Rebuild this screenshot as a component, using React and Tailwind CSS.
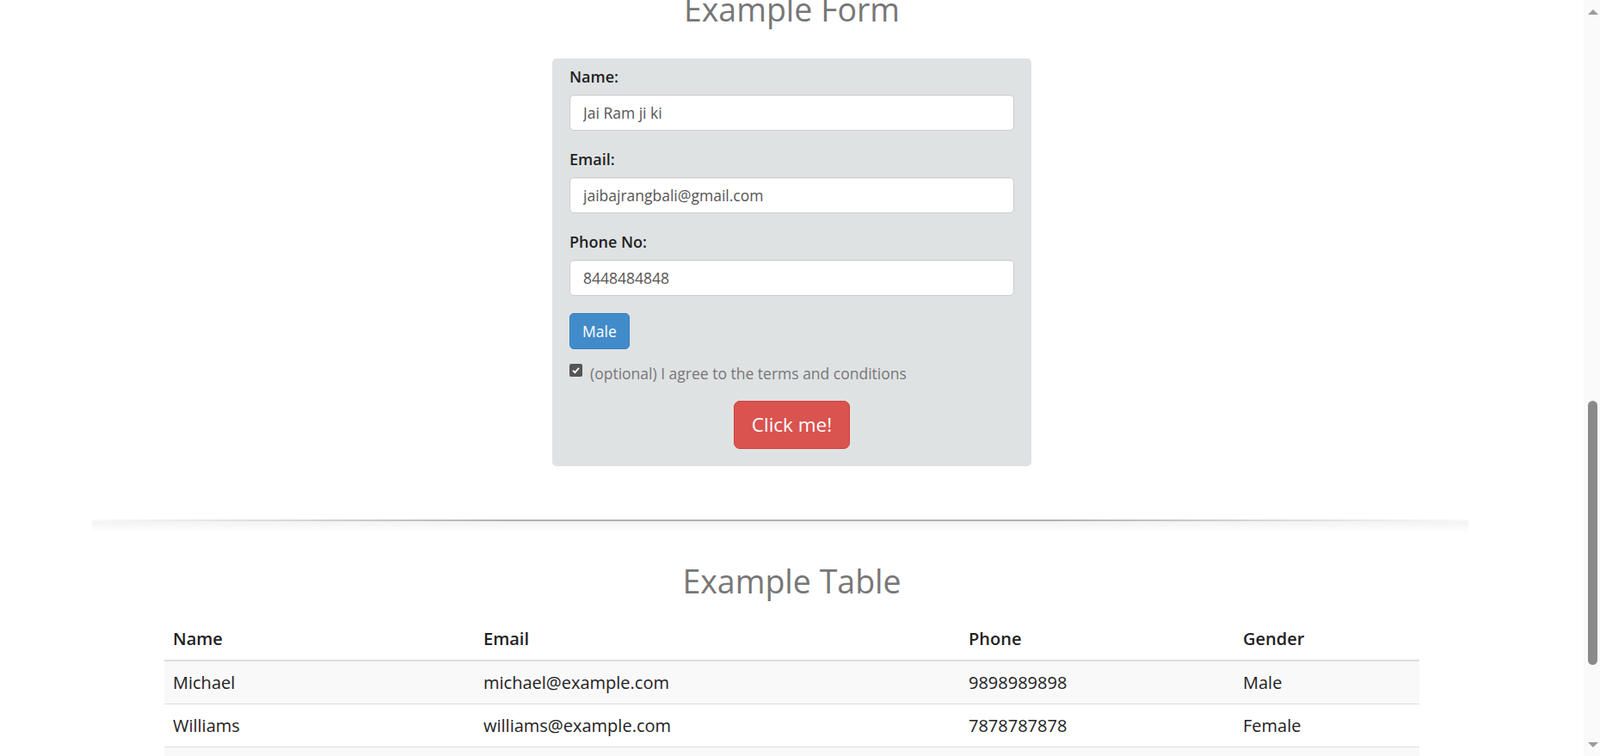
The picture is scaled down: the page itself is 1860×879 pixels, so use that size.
import React from 'react';

const rows = [
  { name: 'Michael', email: 'michael@example.com', phone: '9898989898', gender: 'Male' },
  { name: 'Williams', email: 'williams@example.com', phone: '7878787878', gender: 'Female' },
  { name: 'Sophia', email: 'sophia@example.com', phone: '9696969696', gender: 'Female' },
];

function Field({ label, value }) {
  return (
    <div className="mb-[21px]">
      <label className="block h-[25px] leading-[25px] mb-[8px] text-[18px] font-semibold text-[#222]">{label}</label>
      <input
        readOnly
        value={value}
        className="block w-full h-[42px] px-[15px] text-[17.5px] text-[#555] bg-white border border-[#ccc] rounded-[5px] shadow-[inset_0_1px_1px_rgba(0,0,0,0.075)] outline-none"
      />
    </div>
  );
}

function Scrollbar() {
  return (
    <div className="w-[19px] h-full bg-[#fafafa] flex flex-col items-center">
      <div className="h-[11px]" />
      <div className="w-0 h-0 border-l-[6px] border-r-[6px] border-b-[6px] border-l-transparent border-r-transparent border-b-[#9a9a9a] ml-[2px]" />
      <div className="h-[449px]" />
      <div className="w-[11px] h-[307px] rounded-full bg-[#8a8a8a] ml-[2px]" />
      <div className="flex-1" />
      <div className="w-0 h-0 border-l-[6px] border-r-[6px] border-t-[6px] border-l-transparent border-r-transparent border-t-[#9a9a9a] ml-[2px] mb-[10px]" />
    </div>
  );
}

export default function App() {
  return (
    <div className="flex h-screen w-full overflow-hidden bg-white" style={{ fontFamily: '"Open Sans", sans-serif' }}>
      <div className="flex-1 overflow-hidden">
        <div className="-mt-[10px]">
          <h2 className="text-center text-[37.5px] leading-[41px] text-[#777] font-normal">Example Form</h2>

          <div className="w-[557px] mx-auto mt-[37px] bg-[#dfe2e3] rounded-[5px] px-[20px] pt-[9px] pb-[20px]">
            <Field label="Name:" value="Jai Ram ji ki" />
            <Field label="Email:" value="jaibajrangbali@gmail.com" />
            <Field label="Phone No:" value="8448484848" />
            <button className="h-[42px] px-[14px] -mt-[1px] text-[17.5px] text-white bg-[#428bca] border border-[#357ebd] rounded-[5px]">
              Male
            </button>
            <div className="flex items-start mt-[16px] h-[25px]">
              <span className="mt-[1px] w-[15px] h-[15px] rounded-[2px] bg-[#555] flex items-center justify-center">
                <svg viewBox="0 0 12 12" className="w-[11px] h-[11px]">
                  <path d="M2.2 6.3 L4.8 8.8 L9.8 3.2" fill="none" stroke="#fff" strokeWidth="2" />
                </svg>
              </span>
              <span className="ml-[9px] text-[17.5px] leading-[25px] text-[#777]">(optional) I agree to the terms and conditions</span>
            </div>
            <div className="flex justify-center mt-[19px]">
              <button className="h-[56px] px-[20px] text-[22.5px] text-white bg-[#d9534f] border border-[#d43f3a] rounded-[7px]">
                Click me!
              </button>
            </div>
          </div>

          <div className="ml-[107px] w-[1600px] mt-[62px]">
            <div className="h-[2px] bg-[linear-gradient(to_right,rgba(0,0,0,0.02),rgba(0,0,0,0.3)_30%,rgba(0,0,0,0.3)_70%,rgba(0,0,0,0.02))]" />
            <div className="h-[12px] bg-[linear-gradient(to_bottom,rgba(0,0,0,0.05),rgba(0,0,0,0))]" />
          </div>

          <h2 className="text-center mt-[37px] text-[37.5px] leading-[41px] text-[#777] font-normal">Example Table</h2>

          <table className="w-[1459px] mx-auto mt-[23px] text-[20px] text-[#222] border-collapse">
            <thead>
              <tr className="border-b-2 border-[#ddd]">
                <th className="w-[361px] text-left font-semibold px-[10px] py-[10px] leading-[28px]">Name</th>
                <th className="w-[564px] text-left font-semibold px-[10px] py-[10px] leading-[28px]">Email</th>
                <th className="w-[319px] text-left font-semibold px-[10px] py-[10px] leading-[28px]">Phone</th>
                <th className="text-left font-semibold px-[10px] py-[10px] leading-[28px]">Gender</th>
              </tr>
            </thead>
            <tbody>
              {rows.map((r, i) => (
                <tr key={r.name} className={(i % 2 === 0 ? 'bg-[#f9f9f9] ' : '') + 'border-b border-[#ddd]'}>
                  <td className="px-[10px] py-[10px] leading-[29px]">{r.name}</td>
                  <td className="px-[10px] py-[10px] leading-[29px]">{r.email}</td>
                  <td className="px-[10px] py-[10px] leading-[29px]">{r.phone}</td>
                  <td className="px-[10px] py-[10px] leading-[29px]">{r.gender}</td>
                </tr>
              ))}
            </tbody>
          </table>
        </div>
      </div>
      <Scrollbar />
    </div>
  );
}
